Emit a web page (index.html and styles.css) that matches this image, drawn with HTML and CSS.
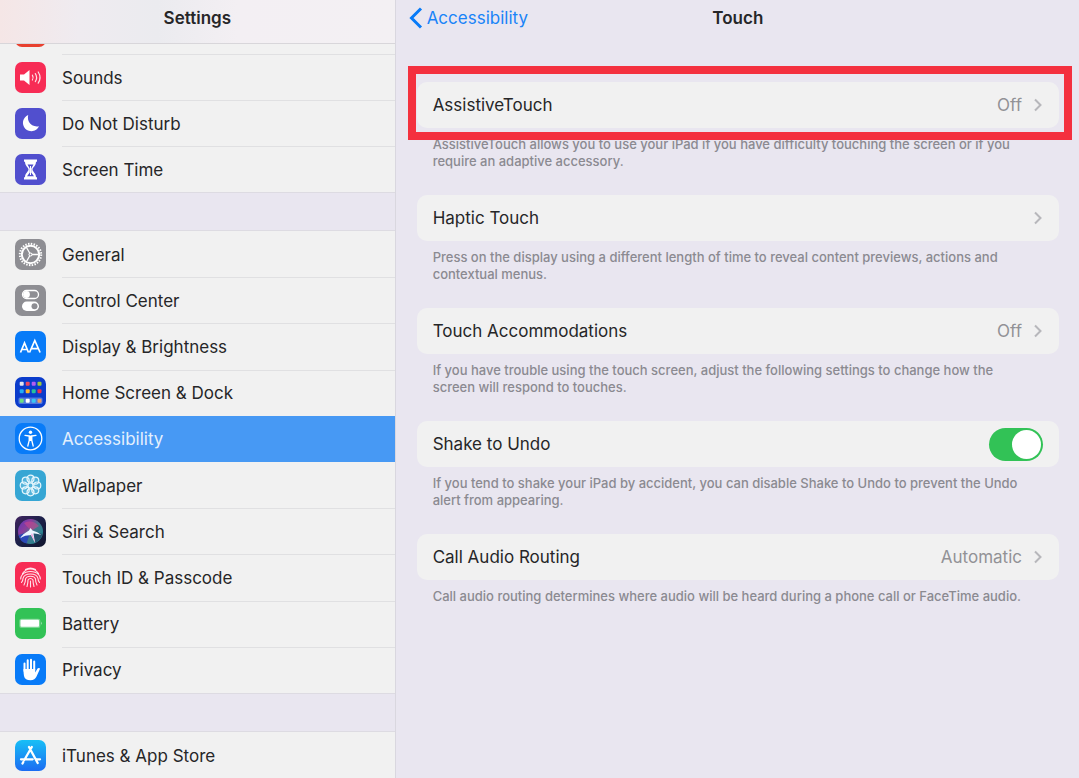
FILE: index.html
```html
<!DOCTYPE html>
<html lang="en">
<head>
    <meta charset="UTF-8">
    <meta name="viewport" content="width=device-width, initial-scale=1.0">
    <title>Settings</title>
    <link rel="stylesheet" href="styles.css">
</head>
<body>
    <div class="app">
        <aside class="sidebar">
            <header class="sidebar-header"><h1>Settings</h1></header>
            <nav class="menu">
                <div class="group group-top">
                    <a class="row" href="#" aria-label="Notifications">
                        <svg class="icon" viewBox="0 0 31 31"><rect width="31" height="31" rx="7" fill="#e8402f"/></svg>
                        <span class="label"></span>
                    </a>
                    <a class="row" href="#">
                        <svg class="icon" viewBox="0 0 31 31">
                            <rect width="31" height="31" rx="7" fill="#f72c55"/>
                            <path d="M5 12.500h4l5.500-4.500v15L9 18.500H5z" fill="#fff"/>
                            <path d="M17.400 13.200q1.500 2.300 0 4.800M20.300 11.600q2.600 3.900 0 8M23.200 10q3.700 5.500 0 11.200" fill="none" stroke="#fff" stroke-width="1.200" stroke-linecap="round" opacity=".85"/>
                        </svg>
                        <span class="label">Sounds</span>
                    </a>
                    <a class="row" href="#">
                        <svg class="icon" viewBox="0 0 31 31">
                            <rect width="31" height="31" rx="7" fill="#514fce"/>
                            <path d="M13.200 7A8.400 8.400 0 1 0 24 18.200 9 9 0 0 1 13.200 7z" fill="#fff"/>
                        </svg>
                        <span class="label">Do Not Disturb</span>
                    </a>
                    <a class="row" href="#">
                        <svg class="icon" viewBox="0 0 31 31">
                            <rect width="31" height="31" rx="7" fill="#514fce"/>
                            <path d="M9 5.500h13v2.200h-1c0 4.200-3.500 5.600-3.500 7.800s3.500 3.600 3.500 7.800h1v2.200H9v-2.200h1c0-4.200 3.500-5.600 3.500-7.800S10 11.900 10 7.700H9z" fill="#fff"/>
                            <path d="M12.500 10.500h6l-2.300 4v4l2.800 3.700h-7l2.800-3.700v-4z" fill="#514fce"/>
                            <path d="M15.500 12v9" stroke="#fff" stroke-width="1"/>
                        </svg>
                        <span class="label">Screen Time</span>
                    </a>
                </div>

                <div class="group group-main">
                    <a class="row" href="#">
                        <svg class="icon" viewBox="0 0 31 31">
                            <rect width="31" height="31" rx="7" fill="#8e8e93"/>
                            <circle cx="15.500" cy="15.500" r="10.700" fill="none" stroke="#fff" stroke-width="2" stroke-dasharray="1.500 1.300"/>
                            <circle cx="15.500" cy="15.500" r="8.700" fill="none" stroke="#fff" stroke-width="2"/>
                            <path d="M15.500 15.500h8M15.500 15.500l-4-7M15.500 15.500l-4 7" stroke="#fff" stroke-width="1.300"/>
                            <circle cx="15.500" cy="15.500" r="2" fill="#fff"/>
                            <circle cx="15.500" cy="15.500" r="1" fill="#8e8e93"/>
                        </svg>
                        <span class="label">General</span>
                    </a>
                    <a class="row" href="#">
                        <svg class="icon" viewBox="0 0 31 31">
                            <rect width="31" height="31" rx="7" fill="#8e8e93"/>
                            <rect x="7.500" y="5.500" width="16" height="8" rx="4" fill="none" stroke="#fff" stroke-width="1.300"/>
                            <circle cx="11.500" cy="9.500" r="3.400" fill="#fff"/>
                            <rect x="7" y="16.500" width="17" height="9.500" rx="4.700" fill="#fff"/>
                            <circle cx="19.500" cy="21.200" r="3" fill="#8e8e93"/>
                        </svg>
                        <span class="label">Control Center</span>
                    </a>
                    <a class="row" href="#">
                        <svg class="icon" viewBox="0 0 31 31">
                            <rect width="31" height="31" rx="7" fill="#087bf8"/>
                            <path d="M5.500 21.500l4-9.500 4 9.500M7 18.500h5M14.500 21.500l5.300-12 5.300 12M16.400 17.700h6.800" fill="none" stroke="#fff" stroke-width="1.700"/>
                        </svg>
                        <span class="label">Display &amp; Brightness</span>
                    </a>
                    <a class="row" href="#">
                        <svg class="icon" viewBox="0 0 31 31">
                            <rect width="31" height="31" rx="7" fill="#0b3ccb"/>
                            <rect x="3.500" y="20.500" width="24" height="6.500" rx="1.500" fill="#5077df"/>
                            <rect x="4.700" y="4.700" width="4" height="4" rx="1" fill="#e5e5ee"/>
                            <rect x="10.700" y="4.700" width="4" height="4" rx="1" fill="#f04860"/>
                            <rect x="16.700" y="4.700" width="4" height="4" rx="1" fill="#b45cf0"/>
                            <rect x="22.500" y="4.700" width="4" height="4" rx="1" fill="#9ccb3c"/>
                            <rect x="4.700" y="12.300" width="4" height="4" rx="1" fill="#22aef4"/>
                            <rect x="10.700" y="12.300" width="4" height="4" rx="1" fill="#ffb52c"/>
                            <rect x="16.700" y="12.300" width="4" height="4" rx="1" fill="#28c29a"/>
                            <rect x="22.500" y="12.300" width="4" height="4" rx="1" fill="#f0304c"/>
                            <rect x="4.700" y="21.800" width="4" height="4" rx="1" fill="#6be082"/>
                            <rect x="10.700" y="21.800" width="4" height="4" rx="1" fill="#fff"/>
                            <rect x="16.700" y="21.800" width="4" height="4" rx="1" fill="#38c7f2"/>
                            <rect x="22.500" y="21.800" width="4" height="4" rx="1" fill="#e89b68"/>
                        </svg>
                        <span class="label">Home Screen &amp; Dock</span>
                    </a>
                    <a class="row selected" href="#" aria-current="page">
                        <svg class="icon" viewBox="0 0 31 31">
                            <rect width="31" height="31" rx="7" fill="#087bf8"/>
                            <circle cx="15.500" cy="15.500" r="11.300" fill="none" stroke="#fff" stroke-width="1.300"/>
                            <circle cx="15.500" cy="9.200" r="1.700" fill="#fff"/>
                            <path d="M10 12.300l4.200.7v4.500l-1.400 5.500M21 12.300l-4.200.7v4.500l1.400 5.500" fill="none" stroke="#fff" stroke-width="1.300" stroke-linecap="round" stroke-linejoin="round"/>
                            <path d="M14 12.500h3v5.500h-3z" fill="#fff"/>
                        </svg>
                        <span class="label">Accessibility</span>
                    </a>
                    <a class="row" href="#">
                        <svg class="icon" viewBox="0 0 31 31">
                            <rect width="31" height="31" rx="7" fill="#36a6d4"/>
                            <g fill="#fff" fill-opacity=".15" stroke="#e6f7fd" stroke-width="1.200">
                                <circle cx="15.500" cy="8.700" r="3.500"/>
                                <circle cx="20.300" cy="10.700" r="3.500"/>
                                <circle cx="22.300" cy="15.500" r="3.500"/>
                                <circle cx="20.300" cy="20.300" r="3.500"/>
                                <circle cx="15.500" cy="22.300" r="3.500"/>
                                <circle cx="10.700" cy="20.300" r="3.500"/>
                                <circle cx="8.700" cy="15.500" r="3.500"/>
                                <circle cx="10.700" cy="10.700" r="3.500"/>
                                <circle cx="15.500" cy="15.500" r="2.500"/>
                            </g>
                        </svg>
                        <span class="label">Wallpaper</span>
                    </a>
                    <a class="row" href="#">
                        <svg class="icon" viewBox="0 0 31 31">
                            <defs>
                                <linearGradient id="siriBg" x2="1" y2="1"><stop stop-color="#40245f"/><stop offset=".5" stop-color="#1b2048"/><stop offset="1" stop-color="#10152c"/></linearGradient>
                                <linearGradient id="siriOrb" x2="1" y2=".8"><stop stop-color="#5938bd"/><stop offset=".35" stop-color="#8b3d9c"/><stop offset=".6" stop-color="#44768c"/><stop offset="1" stop-color="#1a8790"/></linearGradient>
                            </defs>
                            <rect width="31" height="31" rx="7" fill="url(#siriBg)"/>
                            <circle cx="15.500" cy="15.500" r="12.500" fill="url(#siriOrb)"/>
                            <path d="M3.500 19q1.500 7 8 8.500l4-12z" fill="#2b49b8"/>
                            <path d="M9 7q8-4 15 3l-8 5z" fill="#c94590" opacity=".6"/>
                            <path d="M16 15l4 12q6-3 7.500-9z" fill="#24516e"/>
                            <path d="M5 22q4-5 9-7.500l1.500-2.500 2 2.500q5 1 9 4.500-4-1.700-8-1.500l1.500 9.500-4-8q-6 0-11 3z" fill="#eaf6ff"/>
                            <path d="M17 17l3.500 10-4.500-8z" fill="#f3a3df"/>
                        </svg>
                        <span class="label">Siri &amp; Search</span>
                    </a>
                    <a class="row" href="#">
                        <svg class="icon" viewBox="0 0 31 31">
                            <rect width="31" height="31" rx="7" fill="#f72c55"/>
                            <g fill="none" stroke="#ffe3ea" stroke-width="1.100" stroke-linecap="round">
                                <path d="M10.500 7.500q5-3 10 0M7.500 11.500q3-4.500 8-4.500t8 4.500"/>
                                <path d="M5.700 17q0-2.500 1.700-4.500 3-3 8.100-3t8.100 3q1.700 2 1.700 4.500"/>
                                <path d="M6.500 20.500q1.500-2 1.500-4 1-4.500 7.500-4.500t7.500 4.500q0 2 1.500 4"/>
                                <path d="M9 23q1.500-2.500 1.500-6 1-2.700 5-2.700t5 2.700q0 3.500 1.500 6M12 24.500q1-3 1-6.500 1-1.500 2.500-1.500T18 18q0 3.500 1 6.500M15.500 19v6"/>
                            </g>
                        </svg>
                        <span class="label">Touch ID &amp; Passcode</span>
                    </a>
                    <a class="row" href="#">
                        <svg class="icon" viewBox="0 0 31 31">
                            <rect width="31" height="31" rx="7" fill="#32c256"/>
                            <rect x="4.300" y="10.700" width="21" height="9.200" rx="2" fill="#fff" fill-opacity=".35"/>
                            <rect x="5.500" y="11.800" width="18.500" height="7" rx="1" fill="#fff"/>
                            <path d="M26.300 13.500q1.500 1.700 0 3.600z" fill="#fff" fill-opacity=".7"/>
                        </svg>
                        <span class="label">Battery</span>
                    </a>
                    <a class="row" href="#">
                        <svg class="icon" viewBox="0 0 31 31">
                            <rect width="31" height="31" rx="7" fill="#087bf8"/>
                            <path d="M9.500 17V9.500M12.700 16V6.300M16 16V5.700M19.200 16V7.500" stroke="#fff" stroke-width="2" stroke-linecap="round"/>
                            <path d="M8.500 15h11.700v3.500l2.300-4q.8-1 2-.4.700.5.200 1.500l-3.200 7q-1.500 3.700-6 3.700-5.500 0-6.500-4.300-.5-2-.5-7z" fill="#fff"/>
                        </svg>
                        <span class="label">Privacy</span>
                    </a>
                </div>

                <div class="group">
                    <a class="row" href="#">
                        <svg class="icon" viewBox="0 0 31 31">
                            <defs><linearGradient id="store" x2="0" y2="1"><stop stop-color="#18bff6"/><stop offset="1" stop-color="#1b6cf2"/></linearGradient></defs>
                            <rect width="31" height="31" rx="7" fill="url(#store)"/>
                            <path d="M16.800 7l-7.500 13M14 7l8.700 16M6 19.300h11.700M21.500 19.300H25M8.300 22l-.8 1.500" fill="none" stroke="#fff" stroke-width="2.300" stroke-linecap="round"/>
                        </svg>
                        <span class="label">iTunes &amp; App Store</span>
                    </a>
                    <a class="row" href="#" aria-label="Wallet">
                        <span class="icon"></span>
                        <span class="label"></span>
                    </a>
                </div>
            </nav>
        </aside>

        <main class="content">
            <header class="content-header">
                <a class="back" href="#">
                    <svg class="back-arrow" viewBox="0 0 14 22"><path d="M12 1.500L2.500 11l9.500 9.500" fill="none" stroke="#087bf8" stroke-width="3"/></svg>
                    Accessibility
                </a>
                <h2>Touch</h2>
            </header>

            <section class="setting">
                <a class="card highlight" href="#">
                    <span class="name">AssistiveTouch</span>
                    <span class="value">Off</span>
                    <svg class="chevron" viewBox="0 0 8 14"><path d="M1 1.500L6.500 7 1 12.500"/></svg>
                </a>
                <p>AssistiveTouch allows you to use your iPad if you have difficulty touching the screen or if you require an adaptive accessory.</p>
            </section>
            <section class="setting">
                <a class="card" href="#">
                    <span class="name">Haptic Touch</span>
                    <svg class="chevron" viewBox="0 0 8 14"><path d="M1 1.500L6.500 7 1 12.500"/></svg>
                </a>
                <p>Press on the display using a different length of time to reveal content previews, actions and contextual menus.</p>
            </section>
            <section class="setting">
                <a class="card" href="#">
                    <span class="name">Touch Accommodations</span>
                    <span class="value">Off</span>
                    <svg class="chevron" viewBox="0 0 8 14"><path d="M1 1.500L6.500 7 1 12.500"/></svg>
                </a>
                <p>If you have trouble using the touch screen, adjust the following settings to change how the screen will respond to touches.</p>
            </section>
            <section class="setting">
                <div class="card">
                    <label class="name" for="shake">Shake to Undo</label>
                    <input class="switch" type="checkbox" id="shake" checked>
                </div>
                <p>If you tend to shake your iPad by accident, you can disable Shake to Undo to prevent the Undo alert from appearing.</p>
            </section>
            <section class="setting">
                <a class="card" href="#">
                    <span class="name">Call Audio Routing</span>
                    <span class="value">Automatic</span>
                    <svg class="chevron" viewBox="0 0 8 14"><path d="M1 1.500L6.500 7 1 12.500"/></svg>
                </a>
                <p>Call audio routing determines where audio will be heard during a phone call or FaceTime audio.</p>
            </section>
        </main>
    </div>
</body>
</html>
```
FILE: styles.css
```css
* {
    box-sizing: border-box;
}
body {
    margin: 0;
    font-family: Inter, "Liberation Sans", sans-serif;
    font-size: 17px;
    color: #262628;
    background-color: #e9e6f0;
}
a {
    color: inherit;
    text-decoration: none;
}
h1, h2 {
    margin: 0;
    font-size: 17px;
    font-weight: 600;
    line-height: 20px;
}
.app {
    display: grid;
    grid-template-columns: 11fr 19fr;
    height: 100vh;
    overflow: hidden;
}

/* left column */
.sidebar {
    position: relative;
    overflow: hidden;
    border-right: 1px solid #d9d7df;
}
.sidebar-header {
    position: absolute;
    top: 0;
    left: 0;
    right: 0;
    z-index: 1;
    height: 44px;
    padding-top: 8px;
    text-align: center;
    border-bottom: 1px solid #d8d6da;
    background: linear-gradient(90deg, #f5e6e6 0, #efebf0 20%, #ebebef 40%, #f3eff3 60%, #f3f0f3 100%);
}
.menu {
    display: flex;
    flex-direction: column;
    gap: 37px;
    padding-top: 7px;
}
.group {
    display: grid;
    grid-auto-rows: minmax(46px, 1fr);
    background-color: #f1f1f1;
    border-top: 1px solid #dddbe2;
    border-bottom: 1px solid #dddbe2;
}
.group-top {
    min-height: 186px;
}
.group-main {
    min-height: 464px;
}
.row {
    display: flex;
    align-items: center;
    gap: 16px;
    padding-left: 15px;
}
.icon {
    width: 31px;
    height: 31px;
    flex: none;
}
.label {
    flex: 1;
    align-self: stretch;
    display: flex;
    align-items: center;
    border-top: 1px solid #e0e0e2;
}
.row:first-child .label {
    border-top-color: transparent;
}
.selected {
    background-color: #4799f4;
    color: #e4f0fd;
}
.selected .label,
.selected + .row .label {
    border-top-color: transparent;
}

/* right column */
.content {
    padding: 0 20px 0 21px;
}
.content-header {
    position: relative;
    height: 82px;
    padding-top: 8px;
    text-align: center;
}
.back {
    position: absolute;
    top: 7px;
    left: -8px;
    display: flex;
    align-items: center;
    gap: 4px;
    line-height: 22px;
    color: #1a84f8;
}
.back-arrow {
    width: 14px;
    height: 22px;
}
.setting {
    margin-bottom: 25px;
}
.card {
    position: relative;
    display: flex;
    align-items: center;
    gap: 12px;
    min-height: 46px;
    padding: 0 16px;
    border-radius: 10px;
    background-color: #f1f1f1;
}
.name {
    flex: 1;
}
.value {
    color: #929296;
}
.chevron {
    width: 8px;
    height: 14px;
    margin-right: 1px;
    fill: none;
    stroke: #b7b7bb;
    stroke-width: 2;
}
.highlight::after {
    content: "";
    position: absolute;
    inset: -16px -13px -12px -9px;
    border: 8px solid #f4303f;
}
.setting p {
    margin: 0;
    padding: 8px 20px 0 16px;
    font-size: 13px;
    font-weight: 500;
    line-height: 17px;
    color: #8b8a91;
}
.switch {
    appearance: none;
    display: flex;
    justify-content: flex-end;
    width: 54px;
    height: 33px;
    margin: 0;
    padding: 2px;
    border-radius: 17px;
    background-color: #32c256;
}
.switch::before {
    content: "";
    width: 29px;
    height: 29px;
    border-radius: 50%;
    background-color: #fff;
}
.switch:not(:checked) {
    justify-content: flex-start;
    background-color: #d5d4da;
}
```
